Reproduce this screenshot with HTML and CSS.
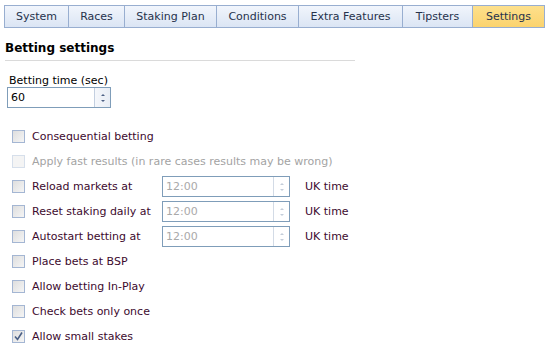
FILE: index.html
```html
<!DOCTYPE html>
<html lang="en">
<head>
  <meta charset="UTF-8">
  <title>Settings</title>
  <link rel="stylesheet" href="styles.css">
</head>
<body>
  <div class="tabs">
    <div class="tab" style="width:64px">System</div>
    <div class="tab" style="width:56px">Races</div>
    <div class="tab" style="width:92px">Staking Plan</div>
    <div class="tab" style="width:82px">Conditions</div>
    <div class="tab" style="width:104px">Extra Features</div>
    <div class="tab" style="width:70px">Tipsters</div>
    <div class="tab active" style="width:65px">Settings</div>
  </div>

  <div class="panel">
    <h2>Betting settings</h2>

    <label class="field-label">Betting time (sec)</label>
    <div class="spin main">
      <span class="spin-value">60</span>
      <span class="spin-btns"><i class="up"></i><i class="down"></i></span>
    </div>

    <div class="options">
      <div class="row"><span class="check"></span>Consequential betting</div>
      <div class="row disabled"><span class="check"></span>Apply fast results (in rare cases results may be wrong)</div>
      <div class="row">
        <span class="check"></span><span class="row-label">Reload markets at</span>
        <div class="spin time"><span class="spin-value">12:00</span><span class="spin-btns"><i class="up"></i><i class="down"></i></span></div>
        <span class="tz">UK time</span>
      </div>
      <div class="row">
        <span class="check"></span><span class="row-label">Reset staking daily at</span>
        <div class="spin time"><span class="spin-value">12:00</span><span class="spin-btns"><i class="up"></i><i class="down"></i></span></div>
        <span class="tz">UK time</span>
      </div>
      <div class="row">
        <span class="check"></span><span class="row-label">Autostart betting at</span>
        <div class="spin time"><span class="spin-value">12:00</span><span class="spin-btns"><i class="up"></i><i class="down"></i></span></div>
        <span class="tz">UK time</span>
      </div>
      <div class="row"><span class="check"></span>Place bets at BSP</div>
      <div class="row"><span class="check"></span>Allow betting In-Play</div>
      <div class="row"><span class="check"></span>Check bets only once</div>
      <div class="row"><span class="check checked"><svg width="11" height="11" viewBox="0 0 11 11"><path d="M2 5.5 L4.5 8.5 L9 1.5" fill="none" stroke="#4a5f85" stroke-width="1.6"/></svg></span>Allow small stakes</div>
    </div>
  </div>
</body>
</html>
```

FILE: styles.css
```css
body {
  margin: 0;
  font-family: "DejaVu Sans", Verdana, sans-serif;
  font-size: 11px;
  color: #3d0a2e;
  background-color: #fff;
}

.tabs {
  display: flex;
  margin: 5px 0 0 4px;
  width: 541px;
  border: 1px solid #98aed0;
  box-sizing: border-box;
  height: 23px;
}

.tab {
  box-sizing: border-box;
  height: 21px;
  line-height: 21px;
  text-align: center;
  color: #26324c;
  background: linear-gradient(#f1f5fc, #dbe5f4);
  border-right: 1px solid #98aed0;
  flex-shrink: 0;
}

.tab.active {
  background: linear-gradient(#fde08c, #fbd36e);
  border-right: none;
  flex-grow: 1;
}

.panel {
  padding: 0 5px;
}

h2 {
  margin: 13px 0 0;
  width: 350px;
  font-size: 12px;
  color: #000;
  padding-bottom: 5px;
  border-bottom: 1px solid #dadada;
}

.field-label {
  display: block;
  margin: 13px 0 0 4px;
  color: #000;
  line-height: 13px;
}

.spin {
  display: flex;
  box-sizing: border-box;
  height: 21px;
  border: 1px solid #7f9db9;
  background-color: #fff;
}

.spin.main {
  width: 104px;
  margin: 0 0 0 2px;
  color: #000;
}

.spin-value {
  flex-grow: 1;
  line-height: 19px;
  padding-left: 3px;
}

.spin-btns {
  width: 15px;
  border-left: 1px solid #c3cfe0;
  background: linear-gradient(to right, #f5f7fb, #e8edf5);
  display: flex;
  flex-direction: column;
  align-items: center;
  justify-content: center;
  gap: 4px;
}

.spin-btns i {
  width: 0;
  height: 0;
  border-left: 2px solid transparent;
  border-right: 2px solid transparent;
}

.spin-btns .up {
  border-bottom: 2px solid #4d6185;
}

.spin-btns .down {
  border-top: 2px solid #4d6185;
}

.time .spin-btns .up {
  border-bottom-color: #c4cdda;
}

.time .spin-btns .down {
  border-top-color: #c4cdda;
}

.options {
  margin-top: 16px;
}

.row {
  display: flex;
  align-items: center;
  height: 25px;
  padding-left: 7px;
}

.row.disabled {
  color: #a3a3a3;
}

.check {
  box-sizing: border-box;
  width: 13px;
  height: 13px;
  border: 1px solid #a4b6d3;
  background: linear-gradient(135deg, #dedede, #f5f5f5);
  margin-right: 7px;
  display: flex;
  align-items: center;
  justify-content: center;
}

.disabled .check {
  border-color: #d6dfeb;
  background: #f4f4f4;
}

.row-label {
  width: 130px;
}

.time {
  width: 128px;
  color: #a9a9a9;
}

.time .spin-btns {
  background: #fff;
  border-left-color: #d3dbe6;
}

.tz {
  margin-left: 15px;
}
```
